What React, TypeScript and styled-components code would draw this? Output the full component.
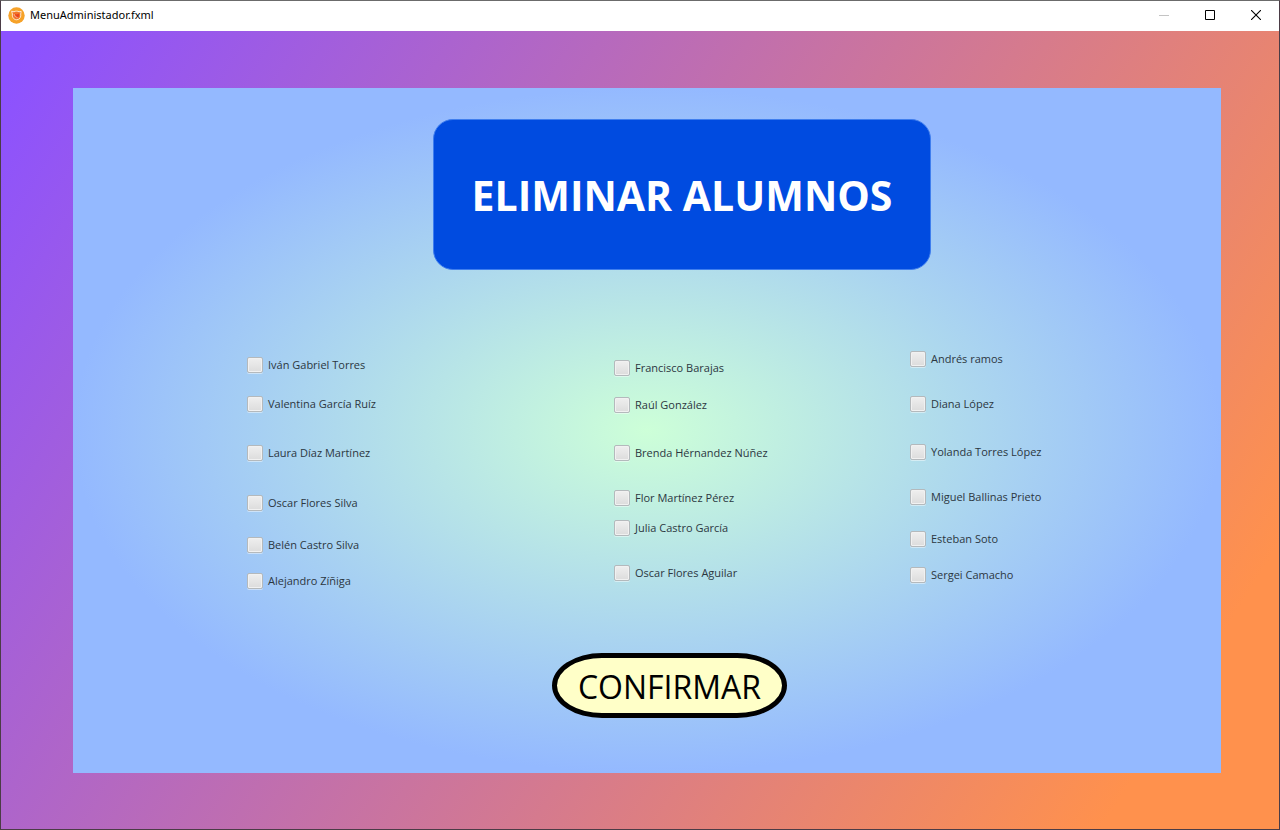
import React from "react";
import styled, { createGlobalStyle } from "styled-components";

const GlobalStyle = createGlobalStyle`
  *, *::before, *::after { box-sizing: border-box; }
  body {
    margin: 0;
    font-family: "Open Sans", "Noto Sans", sans-serif;
  }
`;

const AppWindow = styled.div`
  display: flex;
  flex-direction: column;
  min-height: 100vh;
  border: 1px solid #4b3c46;
  border-top-color: #6b6b6b;
`;

const TitleBar = styled.header`
  display: flex;
  align-items: center;
  height: 30px;
  padding: 0 0 2px 7px;
  background: #fff;
  color: #000;
`;

const WindowTitle = styled.span`
  flex: 1;
  padding-left: 5px;
  font-family: "Noto Sans", "Open Sans", sans-serif;
  font-size: 11px;
  line-height: 16px;
`;

const WindowButton = styled.button`
  display: flex;
  align-items: center;
  justify-content: center;
  width: 46px;
  height: 28px;
  padding: 0;
  border: 0;
  background: transparent;
  color: #000;

  &:disabled { color: #c4c4c4; }
`;

const Backdrop = styled.main`
  display: flex;
  flex: 1;
  padding: 57px 58px 56px 72px;
  background: linear-gradient(122deg, #8c52ff 2%, #ff914d 90%);
`;

const Panel = styled.form`
  display: flex;
  flex: 1;
  flex-direction: column;
  align-items: center;
  padding: 31px 0 55px;
  background: radial-gradient(closest-side, #cdffd8, #94b9ff);
`;

const Heading = styled.h1`
  display: flex;
  align-items: center;
  justify-content: center;
  width: 498px;
  height: 151px;
  margin: 0 0 0 70px;
  border: 1px solid #3f7eee;
  border-radius: 20px;
  background: #004be0;
  color: #fff;
  font-size: 41px;
  font-weight: 700;
  line-height: 56px;
`;

const StudentColumns = styled.div`
  display: grid;
  grid-template-columns: 367fr 296fr 311fr;
  align-self: stretch;
  flex: 1;
  padding: 79px 0 0 174px;
`;

const Column = styled.div<{ $top: number }>`
  display: flex;
  flex-direction: column;
  align-items: flex-start;
  padding-top: ${({ $top }) => $top}px;
`;

const Student = styled.label<{ $gap: number }>`
  display: flex;
  align-items: center;
  gap: 5px;
  height: 18px;
  margin-bottom: ${({ $gap }) => $gap}px;
  color: #2c373f;
  font-size: 11px;
  line-height: 18px;
  white-space: nowrap;
`;

const Tick = styled.input`
  appearance: none;
  width: 16px;
  height: 16px;
  margin: 0;
  border: 1px solid #b4b9bc;
  border-radius: 2px;
  background: linear-gradient(#efefef, #dcdcdc);
  box-shadow: inset 0 0 0 1px #f1f1f1, 0 1px 0 rgba(255, 255, 255, 0.45);

  &:checked { background: #3c4650; }
`;

const ConfirmButton = styled.button`
  width: 235px;
  height: 65px;
  margin-left: 45px;
  padding: 2px 0 0;
  border: 5px solid #000;
  border-radius: 50px / 50%;
  background: #ffffc8;
  color: #000;
  font-family: inherit;
  font-size: 32px;
  line-height: 48px;
`;

type Entry = { name: string; gap: number };

const columns: { top: number; students: Entry[] }[] = [
  {
    top: 7,
    students: [
      { name: "Iván Gabriel Torres", gap: 21 },
      { name: "Valentina García Ruíz", gap: 31 },
      { name: "Laura Díaz Martínez", gap: 32 },
      { name: "Oscar Flores Silva", gap: 24 },
      { name: "Belén Castro Silva", gap: 18 },
      { name: "Alejandro Zíñiga", gap: 0 },
    ],
  },
  {
    top: 10,
    students: [
      { name: "Francisco Barajas", gap: 19 },
      { name: "Raúl González", gap: 30 },
      { name: "Brenda Hérnandez Núñez", gap: 27 },
      { name: "Flor Martínez Pérez", gap: 12 },
      { name: "Julia Castro García", gap: 27 },
      { name: "Oscar Flores Aguilar", gap: 0 },
    ],
  },
  {
    top: 1,
    students: [
      { name: "Andrés ramos", gap: 27 },
      { name: "Diana López", gap: 30 },
      { name: "Yolanda Torres López", gap: 27 },
      { name: "Miguel Ballinas Prieto", gap: 24 },
      { name: "Esteban Soto", gap: 18 },
      { name: "Sergei Camacho", gap: 0 },
    ],
  },
];

const AppIcon = () => (
  <svg width="17" height="17" viewBox="0 0 17 17" aria-hidden="true">
    <circle cx="8.5" cy="8.5" r="8.2" fill="#f6a229" />
    <path
      d="M3.6 4.2 6 4.8C7.6 3.9 9.6 3.9 11 4.8L13.2 4.4 12.7 7C13.4 9.6 11.8 12.6 8.8 12.8 5.8 12.8 3.8 10 4.4 7Z"
      fill="#f2762a"
      stroke="#ffe9cf"
      strokeWidth="1"
      strokeLinejoin="round"
    />
    <path d="M6 6.8 8.6 7.4 11 6.6 11.2 9 9.6 11 7.2 10.6Z" fill="#e8431c" />
    <path d="M6 7 7.4 9.8 9.6 10.6" fill="none" stroke="#ffe0c0" strokeWidth="0.7" />
  </svg>
);

export default function App() {
  return (
    <>
      <GlobalStyle />
      <AppWindow>
        <TitleBar>
          <AppIcon />
          <WindowTitle>MenuAdministador.fxml</WindowTitle>
          <WindowButton type="button" aria-label="Minimizar" disabled>
            <svg width="10" height="10" viewBox="0 0 10 10" stroke="currentColor">
              <path d="M0 5.5H10" />
            </svg>
          </WindowButton>
          <WindowButton type="button" aria-label="Maximizar">
            <svg width="10" height="10" viewBox="0 0 10 10" fill="none" stroke="currentColor">
              <path d="M.5 .5H9.5V9.5H.5Z" />
            </svg>
          </WindowButton>
          <WindowButton type="button" aria-label="Cerrar">
            <svg width="10" height="10" viewBox="0 0 10 10" stroke="currentColor" strokeWidth="1.1">
              <path d="M0 0 10 10M10 0 0 10" />
            </svg>
          </WindowButton>
        </TitleBar>
        <Backdrop>
          <Panel onSubmit={(event) => event.preventDefault()}>
            <Heading>ELIMINAR ALUMNOS</Heading>
            <StudentColumns>
              {columns.map((column) => (
                <Column key={column.top} $top={column.top}>
                  {column.students.map((student) => (
                    <Student key={student.name} $gap={student.gap}>
                      <Tick type="checkbox" name="alumno" value={student.name} />
                      {student.name}
                    </Student>
                  ))}
                </Column>
              ))}
            </StudentColumns>
            <ConfirmButton type="submit">CONFIRMAR</ConfirmButton>
          </Panel>
        </Backdrop>
      </AppWindow>
    </>
  );
}
